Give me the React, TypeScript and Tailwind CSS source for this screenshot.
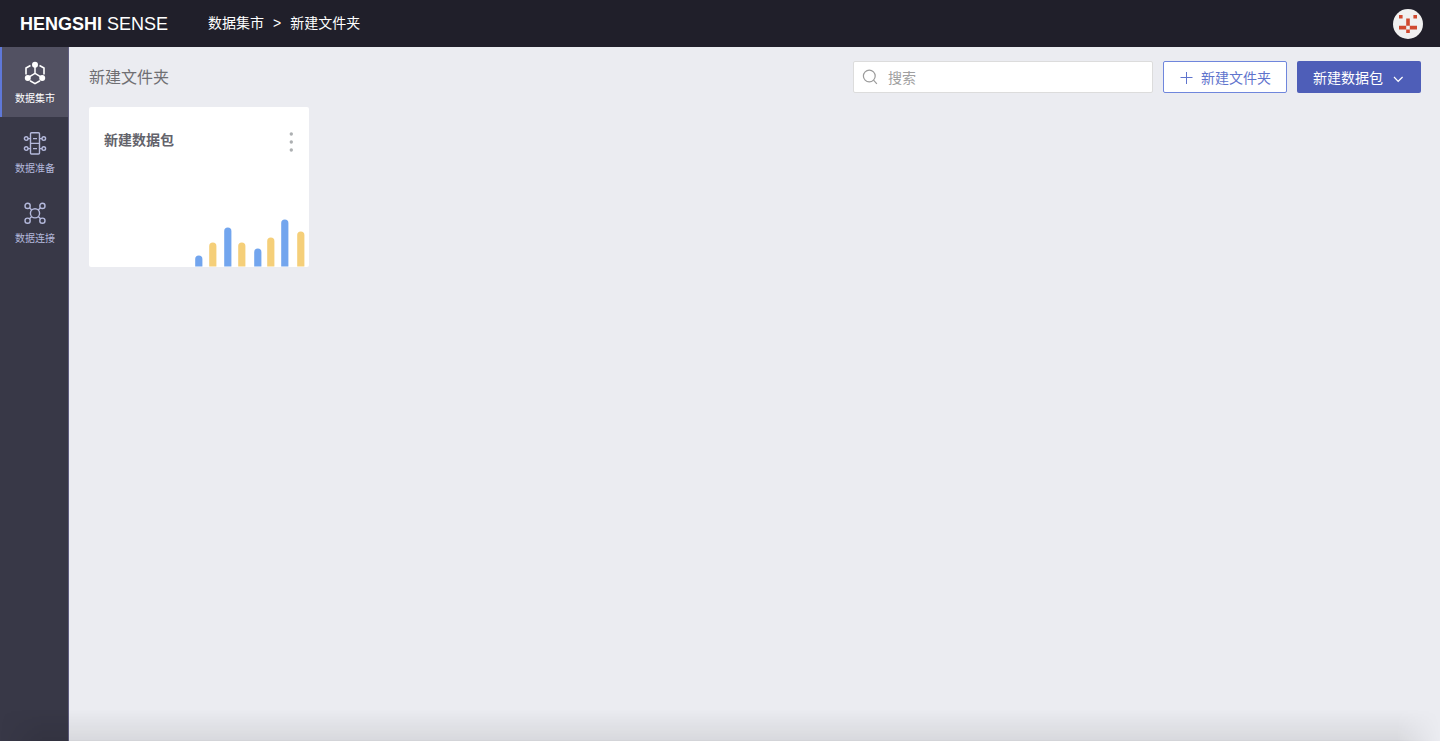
import { useState } from "react";

const navItems = [
  { key: "mart", label: "数据集市", Icon: MartIcon },
  { key: "prepare", label: "数据准备", Icon: PrepareIcon },
  { key: "connect", label: "数据连接", Icon: ConnectIcon },
];

// x offset and height of each bar in the card artwork
const bars = [
  { x: 0, h: 11 },
  { x: 14, h: 24 },
  { x: 29, h: 39 },
  { x: 43, h: 24 },
  { x: 59, h: 18 },
  { x: 72, h: 29 },
  { x: 86, h: 47 },
  { x: 102, h: 35 },
];

function MartIcon() {
  return (
    <svg width="24" height="24" viewBox="0 0 24 24" fill="none" stroke="currentColor" strokeWidth="1.6" aria-hidden="true">
      <path d="M7.5 4.5 3 7v6.5M16.5 4.5 21 7v6.5M7 19.8l5 2.9 5-2.9" />
      <path d="M12 4v8.5M12 12.3l-7 4.4M12 12.3l7 4.4" strokeWidth="1.5" />
      <g fill="currentColor" stroke="none">
        <circle cx="12" cy="3.7" r="3" />
        <circle cx="4.8" cy="16.9" r="3" />
        <circle cx="19.2" cy="16.9" r="3" />
      </g>
    </svg>
  );
}

function PrepareIcon() {
  return (
    <svg width="24" height="24" viewBox="0 0 24 24" fill="none" stroke="currentColor" strokeWidth="1.4" aria-hidden="true">
      <rect x="7.5" y="1.8" width="9" height="21.2" rx="1" />
      <path d="M7.5 12.4h9M10 7.6h4M10 17.6h4M5 7.6h2.5M5 17.6h2.5M16.5 7.6H19M16.5 17.6H19" />
      <circle cx="3.2" cy="7.6" r="1.8" />
      <circle cx="3.2" cy="17.6" r="1.8" />
      <circle cx="20.8" cy="7.6" r="1.8" />
      <circle cx="20.8" cy="17.6" r="1.8" />
    </svg>
  );
}

function ConnectIcon() {
  return (
    <svg width="24" height="24" viewBox="0 0 24 24" fill="none" stroke="currentColor" strokeWidth="1.4" aria-hidden="true">
      <circle cx="12" cy="12.3" r="4.6" />
      <circle cx="4.6" cy="4.9" r="2.6" />
      <circle cx="19.4" cy="4.9" r="2.6" />
      <circle cx="4.6" cy="19.7" r="2.6" />
      <circle cx="19.4" cy="19.7" r="2.6" />
      <path d="m6.5 6.8 2.2 2.2M17.5 6.8l-2.2 2.2M6.5 17.8l2.2-2.2M17.5 17.8l-2.2-2.2" />
    </svg>
  );
}

function Avatar() {
  return (
    <svg width="30" height="30" viewBox="0 0 30 30" aria-hidden="true">
      <circle cx="15" cy="15" r="15" fill="#f0f0f0" />
      <path
        fill="#d0492f"
        d="M6 6h3.6v3.6H6zM20.4 6H24v3.6h-3.6zM13.2 9.6h3.6v7.2h-3.6zM6 16.8h7.2v3.6H6zM16.8 16.8H24v3.6h-7.2zM13.2 20.4h3.6V24h-3.6z"
      />
    </svg>
  );
}

function Header() {
  return (
    <header className="flex h-[47px] items-center bg-[#201f2a] pr-[17px] pl-5 text-white">
      <a href="#" className="text-lg whitespace-nowrap">
        <b>HENGSHI</b> SENSE
      </a>
      <nav aria-label="breadcrumb" className="ml-10 flex flex-1 items-center gap-[9px] pb-0.5 text-sm">
        <a href="#mart">数据集市</a>
        <span>&gt;</span>
        <a href="#folder">新建文件夹</a>
      </nav>
      <button type="button" aria-label="账户">
        <Avatar />
      </button>
    </header>
  );
}

function Sidebar() {
  const [active, setActive] = useState("mart");

  return (
    <nav className="w-[69px] shrink-0 border-r border-[#5f5d80] bg-[#383847]">
      {navItems.map(({ key, label, Icon }) => (
        <a
          key={key}
          href={`#${key}`}
          onClick={() => setActive(key)}
          className={
            active === key
              ? "flex h-[70px] flex-col items-center border-l-2 border-[#5f78d8] bg-[#525162] pt-[14px] text-white"
              : "flex h-[70px] flex-col items-center border-l-2 border-transparent pt-[14px] text-[#b4b9dc]"
          }
        >
          <Icon />
          <span className="mt-1 text-[10px] leading-5">{label}</span>
        </a>
      ))}
    </nav>
  );
}

function PackageCard({ title }: { title: string }) {
  return (
    <article className="flex h-40 w-[220px] flex-col justify-between rounded-xs bg-white">
      <div className="flex items-start justify-between px-[15px] pt-[23px]">
        <h2 className="text-sm font-bold text-[#63636b]">{title}</h2>
        <button type="button" aria-label="更多" className="mt-px text-[#adb0b2]">
          <svg width="6" height="22" viewBox="0 0 6 22" fill="currentColor">
            <circle cx="3.3" cy="3" r="1.7" />
            <circle cx="3.3" cy="11" r="1.7" />
            <circle cx="3.3" cy="19" r="1.7" />
          </svg>
        </button>
      </div>
      <svg width="110" height="48" viewBox="0 0 110 48" className="mr-1 self-end" aria-hidden="true">
        {bars.map(({ x, h }, i) => (
          <path
            key={x}
            d={`M${x + 0.2} 47.4v${-(h - 3.6)}a3.6 3.6 0 0 1 7.2 0V47.4z`}
            fill={i % 2 === 0 ? "#72a5ee" : "#f5cf79"}
          />
        ))}
      </svg>
    </article>
  );
}

function Toolbar() {
  const [query, setQuery] = useState("");

  return (
    <div className="flex items-center justify-between">
      <h1 className="pt-0.5 text-base text-[#6f6f73]">新建文件夹</h1>
      <div className="flex gap-[10px] text-sm">
        <label htmlFor="search" className="flex h-8 w-[300px] items-center gap-[10px] rounded-xs border border-[#dcdcdc] bg-white px-2">
          <svg width="16" height="16" viewBox="0 0 16 16" fill="none" stroke="#9b9b9b" strokeWidth="1.2" aria-hidden="true">
            <circle cx="7.3" cy="7" r="5.9" />
            <path d="m11.5 11.2 3.4 3.6" />
          </svg>
          <input
            id="search"
            type="text"
            aria-label="搜索"
            value={query}
            onChange={(e) => setQuery(e.target.value)}
            placeholder="搜索"
            className="h-full min-w-0 flex-1 pt-0.5 outline-none placeholder:text-[#a0a0a0]"
          />
        </label>
        <button
          type="button"
          className="flex h-8 items-center gap-2 rounded-xs border border-[#6f86dc] bg-white px-[15px] pt-0.5 text-[#5f74cd]"
        >
          <svg width="14" height="14" viewBox="0 0 14 14" fill="none" stroke="currentColor" aria-hidden="true">
            <path d="M7.5 1v12M1.5 6.5h12" />
          </svg>
          新建文件夹
        </button>
        <button type="button" className="flex h-8 items-center gap-2 rounded-xs bg-[#4e5eb8] px-4 pt-0.5 text-white">
          新建数据包
          <svg width="14" height="14" viewBox="0 0 14 14" fill="none" stroke="currentColor" strokeWidth="1.2" aria-hidden="true">
            <path d="m3 6 4.2 4.3L11.6 6" />
          </svg>
        </button>
      </div>
    </div>
  );
}

export default function App() {
  return (
    <div className="relative flex min-h-screen flex-col bg-[#ebecf1] font-['Liberation_Sans','Noto_Sans_CJK_SC',sans-serif]">
      <Header />
      <div className="flex flex-1">
        <Sidebar />
        <main className="flex-1 pt-[14px] pr-[19px] pl-5">
          <Toolbar />
          <section className="mt-[14px] flex flex-wrap gap-5">
            <PackageCard title="新建数据包" />
          </section>
        </main>
      </div>
      <div className="pointer-events-none absolute inset-x-0 bottom-0 h-8 border-b border-black/10 bg-linear-to-t from-black/8 to-transparent mask-x-from-97% mask-x-to-100%" />
    </div>
  );
}
